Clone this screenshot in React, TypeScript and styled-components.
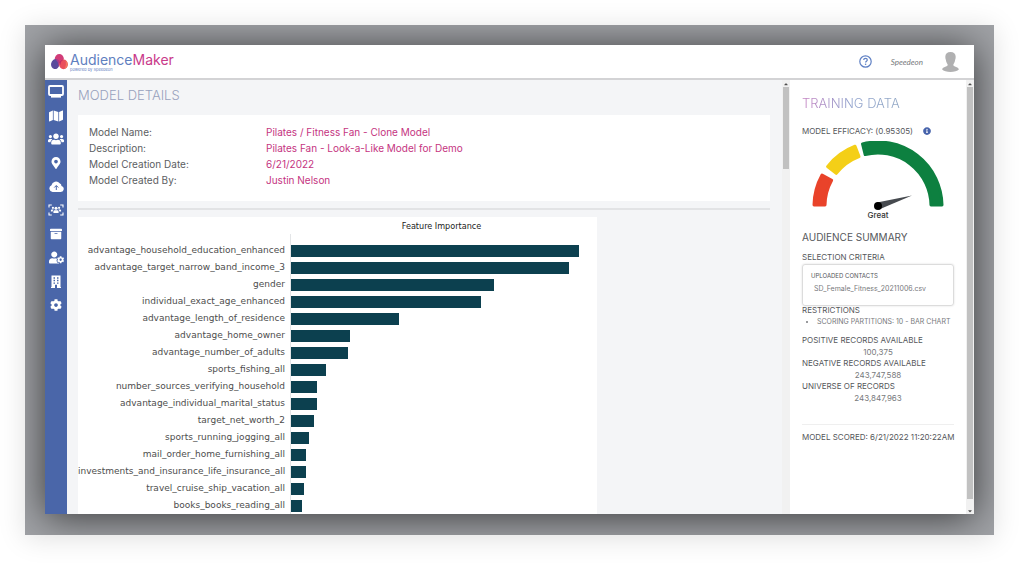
import React from "react";
import styled, { createGlobalStyle } from "styled-components";
import {
  FaMap,
  FaUsers,
  FaMapMarkerAlt,
  FaArchive,
  FaUserCog,
  FaCog,
  FaInfoCircle,
  FaCaretUp,
  FaCaretDown,
} from "react-icons/fa";

const sans = `Inter, "Open Sans", "Liberation Sans", sans-serif`;
const narrowSans = `Lato, "Liberation Sans", sans-serif`;
const chartSans = `"DejaVu Sans", "Noto Sans", sans-serif`;

const GlobalStyle = createGlobalStyle`
  *, *::before, *::after { box-sizing: border-box; }
  body { margin: 0; background: #fff; font-family: ${sans}; color: #5c5e62; }
  h1, h2, h3, p, ul, dl, dd { margin: 0; padding: 0; }
  ul { list-style: none; }
`;

const Page = styled.div`
  display: flex;
  height: 100vh;
  padding: 25px 30px 30px 25px;
`;

const Backdrop = styled.div`
  flex: 1;
  min-width: 0;
  display: flex;
  background: #a0a2a6;
  box-shadow: 0 3px 26px rgba(0, 0, 0, 0.13);
`;

const Clip = styled.div`
  flex: 1;
  min-width: 0;
  display: flex;
  padding: 20px 20px 21px 20px;
  overflow: hidden;
`;

const Window = styled.div`
  flex: 1;
  min-width: 0;
  display: flex;
  flex-direction: column;
  background: #fff;
  box-shadow: 0 3px 36px rgba(0, 0, 0, 0.66);
`;

const Header = styled.header`
  display: flex;
  align-items: center;
  justify-content: space-between;
  height: 35px;
  flex: none;
  padding: 0 15px 0 6px;
  border-bottom: 2px solid #d3d3d5;
`;

const Brand = styled.a`
  display: flex;
  align-items: center;
  gap: 2px;
  color: #5f80bf;
  text-decoration: none;
`;

const BrandText = styled.span`
  display: flex;
  flex-direction: column;
`;

const BrandName = styled.span`
  font: 400 14px/16px ${sans};
`;

const Accent = styled.span`
  color: #c93a8a;
`;

const Tagline = styled.small`
  font: 400 4px/4px ${sans};
`;

const Account = styled.div`
  display: flex;
  align-items: center;
  gap: 19px;
`;

const IconButton = styled.button`
  display: flex;
  padding: 0;
  border: 0;
  background: none;
  color: #5f80c4;
`;

const AccountName = styled.span`
  font: italic 400 8px/12px ${narrowSans};
  color: #77797c;
`;

const Body = styled.div`
  flex: 1;
  min-height: 0;
  display: flex;
`;

const Sidebar = styled.nav`
  flex: none;
  width: 22px;
  background: #4a66a9;
`;

const NavList = styled.ul`
  display: flex;
  flex-direction: column;
  height: 237px;
`;

const NavItem = styled.li`
  flex: 1;
  display: flex;
`;

const NavLink = styled.a`
  flex: 1;
  display: flex;
  align-items: center;
  justify-content: center;
  color: #fff;
`;

const Main = styled.main`
  flex: 1;
  min-width: 0;
  padding: 7px 12px 0 11px;
  background: #f4f5f7;
  overflow: hidden;
`;

const MainTitle = styled.h1`
  font: 300 13px/16px ${sans};
  color: #98a1bd;
`;

const DetailsCard = styled.dl`
  display: grid;
  grid-template-columns: 177px 1fr;
  margin-top: 12px;
  padding: 9px 11px 13px;
  background: #fff;
  font: 400 10px/16px ${sans};
`;

const DetailValue = styled.dd`
  color: #c5347f;
`;

const Divider = styled.hr<{ $before: number; $after: number; $tone: string; $size: number }>`
  margin: ${(p) => p.$before}px 0 ${(p) => p.$after}px;
  border: 0;
  border-top: ${(p) => p.$size}px solid ${(p) => p.$tone};
`;

const Chart = styled.figure`
  width: 75%;
  margin: 0;
  background: #fff;
`;

const ChartTitle = styled.figcaption`
  padding: 1px 0 0 208px;
  font: 400 9px/16px "DejaVu Sans Condensed", "DejaVu Sans", sans-serif;
  font-stretch: condensed;
  color: #222;
  text-align: center;
`;

const Rows = styled.div`
  display: grid;
  grid-template-columns: 212px 1fr;
  grid-template-rows: 8px;
  grid-auto-rows: 17px;
`;

const RowLabel = styled.span`
  padding-right: 5px;
  font: 400 9px/17px ${chartSans};
  color: #4d4d4d;
  text-align: right;
  white-space: nowrap;
`;

const Track = styled.div`
  display: flex;
  align-items: center;
  border-left: 1px solid #e3e5e7;
`;

const Bar = styled.div`
  height: 12px;
  background: #0c404f;
`;

const Scrollbar = styled.div`
  flex: none;
  width: 8px;
  display: flex;
  flex-direction: column;
  align-items: center;
  padding: 0 1px;
  background: #f1f1f1;
  color: #505050;
`;

const Thumb = styled.div<{ $share: number }>`
  width: 100%;
  flex: 0 0 ${(p) => p.$share}%;
  background: #c1c1c1;
`;

const Arrow = styled.span`
  display: flex;
  align-items: center;
  height: 7px;
`;

const Spring = styled.span`
  flex: 1;
`;

const Aside = styled.aside`
  flex: none;
  width: 176px;
  padding: 15px 12px 0 12px;
  overflow: hidden;
`;

const AsideTitle = styled.h2`
  width: fit-content;
  font: 300 13px/16px ${sans};
  color: transparent;
  background: linear-gradient(90deg, #c47fc0, #8d9fcb 50%, #8fa6c4);
  background-clip: text;
  -webkit-background-clip: text;
`;

const Efficacy = styled.div`
  display: flex;
  align-items: center;
  gap: 10px;
  margin-top: 16px;
  color: #4663ab;
`;

const Label = styled.h3`
  font: 400 8px/8px ${sans};
  color: #55575b;
  white-space: nowrap;
`;

const GaugeFigure = styled.figure`
  margin: 6px 0 0;
  display: flex;
  flex-direction: column;
  align-items: center;
  gap: 1px;
`;

const GaugeCaption = styled.figcaption`
  font: 500 8px/8px ${sans};
  color: #333;
`;

const SummaryTitle = styled.h2`
  margin: 11px 0 9px;
  font: 400 10px/14px ${sans};
  color: #55575b;
`;

const Criteria = styled.section`
  margin-top: 3px;
  padding: 6px 8px 10px;
  border: 1px solid #dcdcdc;
  border-radius: 3px;
  box-shadow: 0 0 2px rgba(0, 0, 0, 0.15);
`;

const CriteriaTitle = styled.h4`
  margin: 0;
  font: 400 6px/10px ${sans};
  color: #55575b;
`;

const FileName = styled.p`
  padding: 2px 3px 0;
  font: 400 7px/12px ${sans};
  color: #77797c;
`;

const Restrictions = styled.ul`
  margin: 2px 0 8px;
  padding-left: 15px;
  list-style: disc;
  font: 400 7px/12px ${sans};
  color: #77797c;
  white-space: nowrap;
`;

const Count = styled.p`
  margin: 3px 0 1px;
  font: 400 8px/11px ${sans};
  color: #77797c;
  text-align: center;
`;

const svgProps = { fill: "none", "aria-hidden": true } as const;

const MonitorIcon = () => (
  <svg width="16" height="13" viewBox="0 0 16 13" {...svgProps}>
    <rect x="1" y="1" width="14" height="9" rx="1" stroke="#fff" strokeWidth="1.8" />
    <path d="M3 11.7h10" stroke="#fff" strokeWidth="1.8" />
  </svg>
);

const CloudIcon = () => (
  <svg width="15" height="11" viewBox="0 0 15 11" {...svgProps}>
    <path
      d="M3.6 11A3.5 3.5 0 0 1 2.5 4.3 4.6 4.6 0 0 1 10.600 2.200 3 3 0 0 1 12.500 5 3.050 3.050 0 0 1 11.800 11Z"
      fill="#fff"
    />
    <path d="M7.300 9V4.800M5.300 6.500l2-2 2 2" stroke="#4a66a9" strokeWidth="1" />
  </svg>
);

const AudienceFrameIcon = () => (
  <svg width="16" height="12" viewBox="0 0 16 12" {...svgProps}>
    <path
      d="M1 3.500V1h2.800M12.200 1H15v2.500M15 8.500V11h-2.800M3.800 11H1V8.500"
      stroke="#fff"
      strokeWidth="1.100"
    />
    <g fill="#fff">
      <circle cx="8" cy="4.200" r="1.500" />
      <circle cx="4.900" cy="3.800" r="1.100" />
      <circle cx="11.100" cy="3.800" r="1.100" />
      <path d="M5.400 9V7.600a1.500 1.500 0 0 1 1.500-1.400h2.200a1.500 1.500 0 0 1 1.500 1.400V9ZM2.900 7.600V6.400a1 1 0 0 1 1-1h1.800A2.500 2.500 0 0 0 4.700 7.600ZM13.100 7.600V6.400a1 1 0 0 0-1-1h-1.800a2.500 2.500 0 0 1 1 2.200Z" />
    </g>
  </svg>
);

const BuildingIcon = () => (
  <svg width="10" height="13" viewBox="0 0 10 13" {...svgProps}>
    <path
      fill="#fff"
      fillRule="evenodd"
      d="M0.500 0.500h9v11.500h.500v1H6V9.800H4V13H0v-1h.500ZM2.500 2.200v1.500H4V2.200ZM6 2.200v1.500h1.500V2.200ZM2.500 4.800v1.500H4V4.800ZM6 4.800v1.500h1.500V4.800ZM2.500 7.400v1.400H4V7.400ZM6 7.400v1.400h1.500V7.400Z"
    />
  </svg>
);

const LogoMark = () => (
  <svg width="17" height="16" viewBox="0 0 17 16" {...svgProps}>
    <circle cx="8.300" cy="4.600" r="4.500" fill="#d13c78" />
    <ellipse cx="4.300" cy="10" rx="4.200" ry="5" fill="#5a4a9c" transform="rotate(12 4 10)" />
    <ellipse cx="12.500" cy="10.400" rx="4.400" ry="4.800" fill="#ea4f5c" />
    <path d="M4.500 5.700C6 4.600 8.600 6 8.300 9c-.2 2-1 3.400-2 4.600C7.900 11 7.500 7.500 4.500 5.700Z" fill="#a93a8c" />
    <path d="M8.300 8.300c1-2 2.700-2.800 4-2.400-1.800.7-2.900 2.300-2.600 5-.9-.8-1.300-1.600-1.400-2.600Z" fill="#c22e63" />
    <path d="M14.500 6.600c1.600 1 2.200 2.600 2 4.300-.2 1.900-1.500 3.600-3.200 3.800 1.500-2 2.200-5.200 1.200-8.100Z" fill="#f27a5e" />
  </svg>
);

const HelpIcon = () => (
  <svg width="13" height="13" viewBox="0 0 13 13" {...svgProps}>
    <circle cx="6.500" cy="6.500" r="5.700" stroke="currentColor" strokeWidth="1.200" />
    <path
      d="M4.700 5.100c0-1.100.8-1.700 1.800-1.700s1.800.6 1.800 1.600c0 1.200-1.700 1.200-1.700 2.500"
      stroke="currentColor"
      strokeWidth="1.200"
    />
    <circle cx="6.600" cy="9.200" r=".8" fill="currentColor" />
  </svg>
);

const AvatarIcon = () => (
  <svg width="17" height="20" viewBox="0 0 17 20" {...svgProps}>
    <path
      fill="#b0b0b1"
      d="M8.500 0c3.200 0 5.200 1.700 5.200 4.800 0 1.300-.2 2.400-.6 3.300-.3 2-1 3.500-1.700 4.200v1.300c.6 1 4.500 1.500 5.600 3.600-1.400 1.800-5 2.800-8.500 2.800S1.400 19 0 17.200c1.100-2.100 5-2.600 5.600-3.600v-1.300c-.7-.7-1.400-2.200-1.700-4.200-.4-.9-.6-2-.6-3.300C3.300 1.700 5.300 0 8.500 0Z"
    />
  </svg>
);

const polar = (radius: number, degrees: number) => {
  const a = (degrees * Math.PI) / 180;
  return `${66 + radius * Math.cos(a)} ${65 - radius * Math.sin(a)}`;
};

const segment = (from: number, to: number) =>
  `M${polar(64, from)}A64 64 0 0 1 ${polar(64, to)}L${polar(53, to)}A53 53 0 0 0 ${polar(53, from)}Z`;

const gaugeParts = [
  { from: 179, to: 151, color: "#e9432a" },
  { from: 142, to: 111, color: "#f4cf17" },
  { from: 104, to: 1, color: "#0d8040" },
];

const Gauge = () => (
  <svg width="132" height="69" viewBox="0 0 132 69" {...svgProps}>
    {gaugeParts.map((g) => (
      <path
        key={g.color}
        d={segment(g.from, g.to)}
        fill={g.color}
        stroke={g.color}
        strokeWidth="3"
        strokeLinejoin="round"
      />
    ))}
    <path d="M65 61.500 100 54.500 67 68.500Z" fill="#464a4f" />
    <circle cx="66" cy="65" r="4" fill="#000" />
  </svg>
);

const navItems = [
  { name: "Dashboard", icon: <MonitorIcon /> },
  { name: "Maps", icon: <FaMap size={14} /> },
  { name: "Audiences", icon: <FaUsers size={16} /> },
  { name: "Locations", icon: <FaMapMarkerAlt size={12} /> },
  { name: "Upload", icon: <CloudIcon /> },
  { name: "Look-alikes", icon: <AudienceFrameIcon /> },
  { name: "Archive", icon: <FaArchive size={12} /> },
  { name: "User settings", icon: <FaUserCog size={15} /> },
  { name: "Company", icon: <BuildingIcon /> },
  { name: "Settings", icon: <FaCog size={12} /> },
];

const details = [
  ["Model Name:", "Pilates / Fitness Fan - Clone Model"],
  ["Description:", "Pilates Fan - Look-a-Like Model for Demo"],
  ["Model Creation Date:", "6/21/2022"],
  ["Model Created By:", "Justin Nelson"],
];

const features: [string, number][] = [
  ["advantage_household_education_enhanced", 94],
  ["advantage_target_narrow_band_income_3", 90.7],
  ["gender", 66.4],
  ["individual_exact_age_enhanced", 62],
  ["advantage_length_of_residence", 35.2],
  ["advantage_home_owner", 19.2],
  ["advantage_number_of_adults", 18.7],
  ["sports_fishing_all", 11.5],
  ["number_sources_verifying_household", 8.6],
  ["advantage_individual_marital_status", 8.4],
  ["target_net_worth_2", 7.4],
  ["sports_running_jogging_all", 5.9],
  ["mail_order_home_furnishing_all", 5],
  ["investments_and_insurance_life_insurance_all", 4.9],
  ["travel_cruise_ship_vacation_all", 4.2],
  ["books_books_reading_all", 3.7],
];

const counts = [
  ["POSITIVE RECORDS AVAILABLE", "100,375"],
  ["NEGATIVE RECORDS AVAILABLE", "243,747,588"],
  ["UNIVERSE OF RECORDS", "243,847,963"],
];

export default function App() {
  return (
    <>
      <GlobalStyle />
      <Page>
        <Backdrop>
          <Clip>
            <Window>
              <Header>
                <Brand href="#">
                  <LogoMark />
                  <BrandText>
                    <BrandName>
                      Audience<Accent>Maker</Accent>
                    </BrandName>
                    <Tagline>powered by Speedeon</Tagline>
                  </BrandText>
                </Brand>
                <Account>
                  <IconButton type="button" aria-label="Help">
                    <HelpIcon />
                  </IconButton>
                  <AccountName>Speedeon</AccountName>
                  <IconButton type="button" aria-label="Account">
                    <AvatarIcon />
                  </IconButton>
                </Account>
              </Header>
              <Body>
                <Sidebar aria-label="Main">
                  <NavList>
                    {navItems.map((n) => (
                      <NavItem key={n.name}>
                        <NavLink href="#" aria-label={n.name}>
                          {n.icon}
                        </NavLink>
                      </NavItem>
                    ))}
                  </NavList>
                </Sidebar>
                <Main>
                  <MainTitle>MODEL DETAILS</MainTitle>
                  <DetailsCard>
                    {details.map(([term, value]) => (
                      <React.Fragment key={term}>
                        <dt>{term}</dt>
                        <DetailValue>{value}</DetailValue>
                      </React.Fragment>
                    ))}
                  </DetailsCard>
                  <Divider $before={7} $after={7} $tone="#e2e3e5" $size={2} />
                  <Chart>
                    <ChartTitle>Feature Importance</ChartTitle>
                    <Rows>
                      <span />
                      <Track />
                      {features.map(([name, value]) => (
                        <React.Fragment key={name}>
                          <RowLabel>{name}</RowLabel>
                          <Track>
                            <Bar style={{ width: `${value}%` }} />
                          </Track>
                        </React.Fragment>
                      ))}
                    </Rows>
                  </Chart>
                </Main>
                <Scrollbar aria-hidden>
                  <Arrow>
                    <FaCaretUp size={6} />
                  </Arrow>
                  <Thumb $share={19} />
                </Scrollbar>
                <Aside>
                  <AsideTitle>TRAINING DATA</AsideTitle>
                  <Efficacy>
                    <Label>MODEL EFFICACY: (0.95305)</Label>
                    <FaInfoCircle size={8} />
                  </Efficacy>
                  <GaugeFigure>
                    <Gauge />
                    <GaugeCaption>Great</GaugeCaption>
                  </GaugeFigure>
                  <SummaryTitle>AUDIENCE SUMMARY</SummaryTitle>
                  <Label>SELECTION CRITERIA</Label>
                  <Criteria>
                    <CriteriaTitle>UPLOADED CONTACTS</CriteriaTitle>
                    <FileName>SD_Female_Fitness_20211006.csv</FileName>
                  </Criteria>
                  <Label>RESTRICTIONS</Label>
                  <Restrictions>
                    <li>SCORING PARTITIONS: 10 - BAR CHART</li>
                  </Restrictions>
                  {counts.map(([name, value]) => (
                    <React.Fragment key={name}>
                      <Label>{name}</Label>
                      <Count>{value}</Count>
                    </React.Fragment>
                  ))}
                  <Divider $before={20} $after={8} $tone="#efefef" $size={1} />
                  <Label>MODEL SCORED: 6/21/2022 11:20:22AM</Label>
                </Aside>
                <Scrollbar aria-hidden>
                  <Arrow>
                    <FaCaretUp size={6} />
                  </Arrow>
                  <Thumb $share={95} />
                  <Spring />
                  <Arrow>
                    <FaCaretDown size={6} />
                  </Arrow>
                </Scrollbar>
              </Body>
            </Window>
          </Clip>
        </Backdrop>
      </Page>
    </>
  );
}
